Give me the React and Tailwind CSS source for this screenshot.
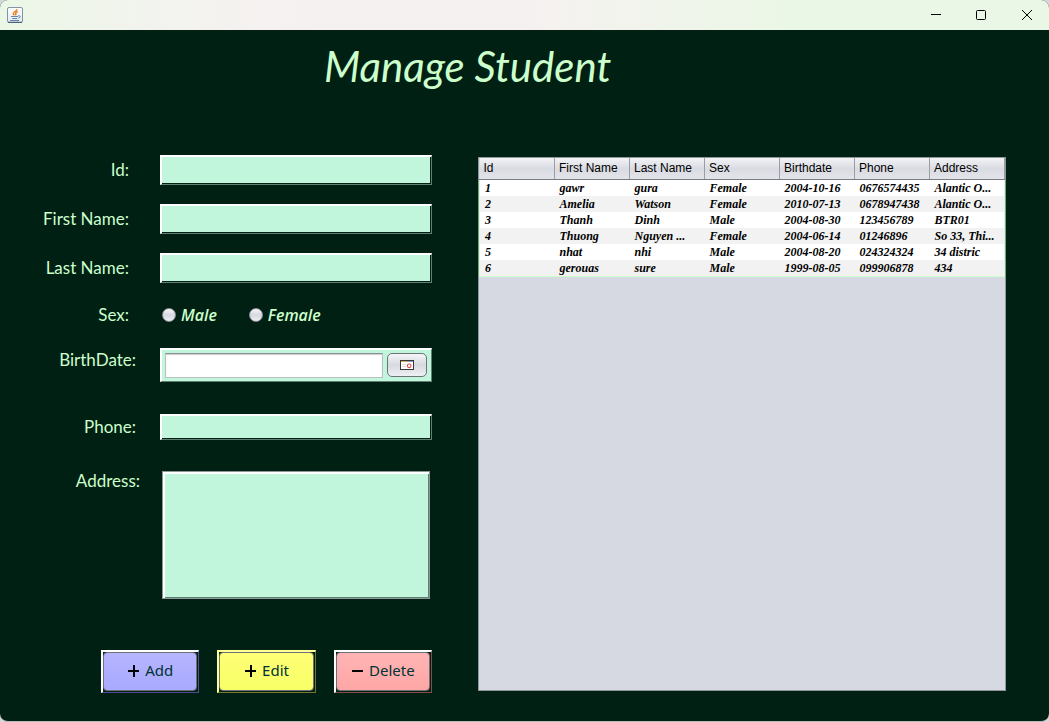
import { useState } from "react";

const columns = ["Id", "First Name", "Last Name", "Sex", "Birthdate", "Phone", "Address"];

const students = [
  ["1", "gawr", "gura", "Female", "2004-10-16", "0676574435", "Alantic O..."],
  ["2", "Amelia", "Watson", "Female", "2010-07-13", "0678947438", "Alantic O..."],
  ["3", "Thanh", "Dinh", "Male", "2004-08-30", "123456789", "BTR01"],
  ["4", "Thuong", "Nguyen ...", "Female", "2004-06-14", "01246896", "So 33, Thi..."],
  ["5", "nhat", "nhi", "Male", "2004-08-20", "024324324", "34 distric"],
  ["6", "gerouas", "sure", "Male", "1999-08-05", "099906878", "434"],
];

const bevel =
  "border-t-2 border-l-2 border-r border-b border-t-white border-l-white border-r-[#607e72] border-b-[#607e72] bg-[#c1f6dc]";
const fieldShadow = "shadow-[inset_-1px_-1px_0_#002014]";
const labelText = "shrink-0 w-40 text-right text-[17px] leading-6 text-[#ccffcc] font-['Lato',sans-serif]";

function JavaIcon() {
  return (
    <svg width="16" height="16" viewBox="0 0 16 16" aria-hidden="true">
      <defs>
        <linearGradient id="tile" x1="0" y1="0" x2="0" y2="1">
          <stop offset="0" stopColor="#ffffff" />
          <stop offset="1" stopColor="#e3e9ee" />
        </linearGradient>
      </defs>
      <rect x="0.5" y="0.5" width="15" height="15" rx="1.5" fill="url(#tile)" stroke="#8296a8" />
      <path d="M1 15.3h14" stroke="#4d6478" strokeWidth="1.2" />
      <path d="M10 2.3C10 4.3 6 4.8 6.3 6.6c.1.8.9 1 1 1.7M10.8 4.6C8.8 5.3 8.3 6 8.8 6.9c.3.6.1 1-.4 1.4" fill="none" stroke="#ee7a1c" strokeWidth="1.4" />
      <path d="M4 9.5h7M5.3 11.5h4.9M3.2 13.5h8.8M11 8.9c2.8-.8 3 1.7.3 2.3" fill="none" stroke="#5f86a6" strokeWidth="1" />
    </svg>
  );
}

function CalendarIcon() {
  return (
    <svg width="14" height="12" viewBox="0 0 14 12" aria-hidden="true">
      <rect x="0.5" y="1.5" width="13" height="9" fill="#fff" stroke="#373737" />
      <path d="M1 2.5h6" stroke="#e6a64b" />
      <path d="M7 2.5h6" stroke="#7ea4c4" />
      <path d="M2 5.5h4M2 7.5h4" stroke="#e0e0e0" />
      <circle cx="9.2" cy="6.8" r="1.8" fill="#fff" stroke="#e04848" strokeWidth="1.1" />
    </svg>
  );
}

function TextRow({ id, label, pad, height, value, onChange }) {
  return (
    <div className="flex items-center">
      <label htmlFor={id} className={`${labelText} ${pad}`}>{label}</label>
      <input
        id={id}
        type="text"
        value={value}
        onChange={onChange}
        className={`min-w-0 flex-1 px-2 outline-none ${height} ${bevel} ${fieldShadow}`}
      />
    </div>
  );
}

function SexOption({ label, checked, onSelect }) {
  return (
    <label className="flex items-center gap-[5px] font-['Open_Sans',sans-serif] text-base font-semibold italic leading-6 text-[#ccffcc]">
      <input
        type="radio"
        name="sex"
        checked={checked}
        onChange={onSelect}
        className="size-[14px] appearance-none rounded-full border border-[#8b8e96] bg-linear-to-b from-[#f8f8fa] via-[#d5d8df] to-[#eeeff3] checked:border-4 checked:border-[#dfe2e8] checked:bg-[#222]"
      />
      {label}
    </label>
  );
}

function ActionButton({ label, minus, frame, face }) {
  return (
    <button type="button" className={`flex h-[43px] flex-1 border-t-2 border-l-2 border-r border-b pr-px pb-px ${frame}`}>
      <span
        className={`flex flex-1 items-center justify-center gap-[5px] self-stretch rounded-[4px] border border-[#6c7078] pb-[3px] font-['Noto_Sans',sans-serif] text-[15px] leading-5 text-[#003333] ${face}`}
      >
        <svg width="13" height="13" viewBox="0 0 13 13" aria-hidden="true">
          <path d={minus ? "M1 7h11" : "M1 7h11M7 1v12"} stroke="#000" strokeWidth="2" fill="none" />
        </svg>
        {label}
      </span>
    </button>
  );
}

export default function App() {
  const [form, setForm] = useState({ id: "", first: "", last: "", sex: "", birth: "", phone: "", address: "" });
  const set = (key) => (e) => setForm({ ...form, [key]: e.target.value });

  return (
    <div className="bg-[#d5d8dc]">
      <div className="flex min-h-screen flex-col overflow-hidden rounded-lg border-b border-[#b8bcb9] bg-[#002014]">
        <header className="flex h-[30px] shrink-0 items-center justify-between bg-[linear-gradient(to_right,#ebf7e6_0%,#f2f3ee_14%,#f6f1f1_30%,#f6f1f1_50%,#ebf7e6_75%)] pl-[7px]">
          <JavaIcon />
          <div className="flex h-full">
            <button type="button" aria-label="Minimize" className="flex w-[45px] items-center justify-center">
              <svg width="10" height="10" viewBox="0 0 10 10"><path d="M0 4.5h10" stroke="#000" /></svg>
            </button>
            <button type="button" aria-label="Maximize" className="flex w-[46px] items-center justify-center">
              <svg width="10" height="10" viewBox="0 0 10 10"><rect x="0.5" y="0.5" width="9" height="9" rx="1" fill="none" stroke="#000" /></svg>
            </button>
            <button type="button" aria-label="Close" className="flex w-[45px] items-center justify-center">
              <svg width="10" height="10" viewBox="0 0 10 10"><path d="M0 0l10 10M10 0L0 10" stroke="#000" /></svg>
            </button>
          </div>
        </header>

        <main className="flex flex-1 flex-col pr-[43px] pb-7">
          <h1 className="h-[125px] pt-3 pl-[324px] font-['Lato',sans-serif] text-[42px] font-normal italic leading-[48px] text-[#ccffcc]">
            Manage Student
          </h1>

          <div className="flex flex-1 gap-[46px]">
            <form className="flex w-[432px] shrink-0 flex-col" onSubmit={(e) => e.preventDefault()}>
              <div className="flex flex-col gap-[19px]">
                <TextRow id="sid" label="Id:" pad="pr-[31px]" height="h-[30px]" value={form.id} onChange={set("id")} />
                <TextRow id="first" label="First Name:" pad="pr-[31px]" height="h-[30px]" value={form.first} onChange={set("first")} />
                <TextRow id="last" label="Last Name:" pad="pr-[31px]" height="h-[30px]" value={form.last} onChange={set("last")} />
              </div>

              <div role="radiogroup" aria-labelledby="sex-label" className="mt-5 flex items-center">
                <span id="sex-label" className={`${labelText} pr-[31px]`}>Sex:</span>
                <div className="flex gap-8 pl-[2px]">
                  <SexOption label="Male" checked={form.sex === "m"} onSelect={() => setForm({ ...form, sex: "m" })} />
                  <SexOption label="Female" checked={form.sex === "f"} onSelect={() => setForm({ ...form, sex: "f" })} />
                </div>
              </div>

              <div className="mt-[21px] flex">
                <label htmlFor="birth" className={`${labelText} pr-6`}>BirthDate:</label>
                <div className={`flex h-[34px] min-w-0 flex-1 gap-1 p-[3px] pr-1 ${bevel}`}>
                  <input
                    id="birth"
                    type="text"
                    value={form.birth}
                    onChange={set("birth")}
                    className="h-[25px] min-w-0 flex-1 border border-[#bbbfc2] border-t-[#8c9093] bg-white px-2 shadow-[inset_0_1px_1px_#ccc] outline-none"
                  />
                  <button
                    type="button"
                    aria-label="Choose date"
                    className="flex h-6 w-10 items-center justify-center rounded-[5px] border border-[#6e7279] bg-linear-to-b from-[#f5f6f8] via-[#d6d9df] to-[#eff0f5]"
                  >
                    <CalendarIcon />
                  </button>
                </div>
              </div>

              <div className="mt-8">
                <TextRow id="phone" label="Phone:" pad="pr-6" height="h-[26px]" value={form.phone} onChange={set("phone")} />
              </div>

              <div className="mt-[31px] flex pr-[2px]">
                <label htmlFor="address" className={`${labelText} mr-[2px] -mt-[2px] pr-5`}>Address:</label>
                <textarea
                  id="address"
                  value={form.address}
                  onChange={set("address")}
                  className="h-32 min-w-0 flex-1 resize-none border border-[#8d9797] bg-[#c1f6dc] p-2 shadow-[inset_2px_2px_0_#fff,inset_-1px_-1px_0_#607e72] outline-none"
                />
              </div>

              <div className="mt-[51px] flex gap-[18px] pl-[101px]">
                <ActionButton
                  label="Add"
                  frame="border-t-white border-l-white border-r-[#504b96] border-b-[#504b96]"
                  face="bg-linear-to-b from-[#b5b5ff] to-[#a9a9ff]"
                />
                <ActionButton
                  label="Edit"
                  frame="border-t-[#ffff96] border-l-[#ffff96] border-r-[#77762d] border-b-[#77762d]"
                  face="bg-linear-to-b from-[#ffff75] to-[#f7ff66]"
                />
                <ActionButton
                  label="Delete"
                  minus
                  frame="border-t-white border-l-white border-r-[#8a4a4a] border-b-[#8a4a4a]"
                  face="bg-linear-to-b from-[#ffb4b4] to-[#ffa6a6]"
                />
              </div>
            </form>

            <section className="mt-[2px] mb-[2px] min-w-0 flex-1 border border-[#8e9698] bg-[#d6d9e1]">
              <table className="w-full table-fixed border-collapse text-left text-black">
                <thead>
                  <tr className="bg-linear-to-b from-[#f2f3f6] via-[#d9dbe2] to-[#e4e6eb]">
                    {columns.map((name) => (
                      <th
                        key={name}
                        className="border-r border-b border-r-[#9a9da5] border-b-[#777b82] p-0 pl-1 font-['Liberation_Sans',sans-serif] text-[12px] font-normal leading-[21px] whitespace-nowrap"
                      >
                        {name}
                      </th>
                    ))}
                  </tr>
                </thead>
                <tbody className="border border-[#ccffcc] bg-white">
                  {students.map((row) => (
                    <tr key={row[0]} className="h-4 even:bg-[#f2f2f2]">
                      {row.map((cell, i) => (
                        <td
                          key={i}
                          className="p-0 pl-[5px] font-['Liberation_Serif',serif] text-[12px] font-bold italic leading-4 whitespace-nowrap"
                        >
                          {cell}
                        </td>
                      ))}
                    </tr>
                  ))}
                </tbody>
              </table>
            </section>
          </div>
        </main>
      </div>
    </div>
  );
}
